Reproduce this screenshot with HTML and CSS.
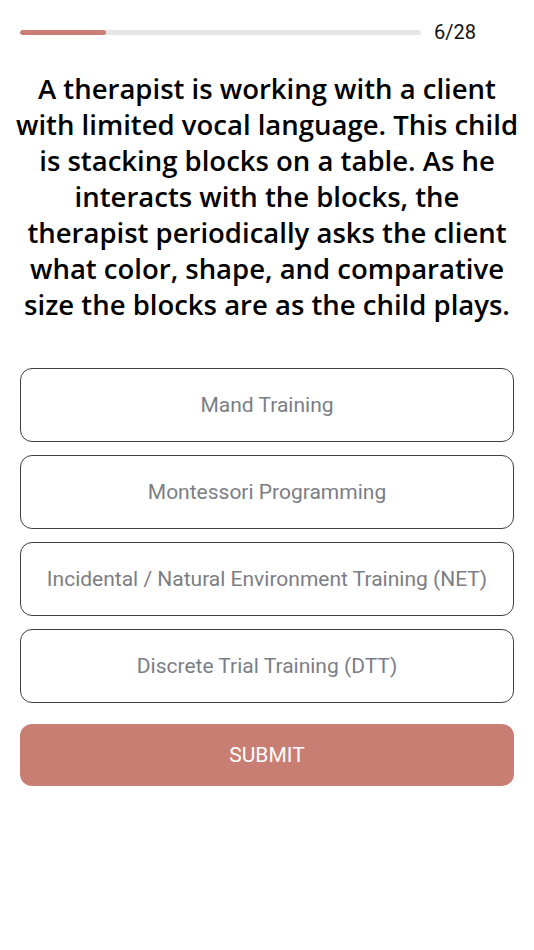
FILE: index.html
```html
<!DOCTYPE html>
<html lang="en">
<head>
    <meta charset="UTF-8">
    <meta name="viewport" content="width=device-width, initial-scale=1.0">
    <title>Quiz</title>
    <link rel="stylesheet" href="styles.css">
</head>
<body>
    <div class="quiz">
        <div class="progress-row">
            <div class="progress-track">
                <div class="progress-fill" style="width: 21.4%"></div>
            </div>
            <span class="progress-count">6/28</span>
        </div>
        <h1 class="question">A therapist is working with a client<br>with limited vocal language. This child<br>is stacking blocks on a table. As he<br>interacts with the blocks, the<br>therapist periodically asks the client<br>what color, shape, and comparative<br>size the blocks are as the child plays.</h1>
        <div class="options">
            <button class="option">Mand Training</button>
            <button class="option">Montessori Programming</button>
            <button class="option">Incidental / Natural Environment Training (NET)</button>
            <button class="option">Discrete Trial Training (DTT)</button>
        </div>
        <button class="submit">SUBMIT</button>
    </div>
</body>
</html>
```

FILE: styles.css
```css
*{
    padding: 0;
    margin: 0;
    box-sizing: border-box;
}
body{
    background-color: white;
    font-family: "Open Sans", "Liberation Sans", sans-serif;
}
.quiz{
    padding: 0 20px;
}
.progress-row{
    display: flex;
    align-items: center;
    height: 64px;
    padding-right: 36px;
    gap: 13px;
}
.progress-track{
    flex: 1;
    height: 5px;
    border-radius: 3px;
    background-color: #e6e6e9;
    overflow: hidden;
}
.progress-fill{
    height: 100%;
    border-radius: 3px;
    background-color: #c97d74;
}
.progress-count{
    width: 44px;
    font-family: Roboto, sans-serif;
    font-size: 20px;
    color: #111;
}
.question{
    margin: 7px -10px 0;
    font-family: "Open Sans", sans-serif;
    font-weight: 600;
    font-size: 27.5px;
    line-height: 36px;
    text-align: center;
    color: #000;
}
.options{
    display: flex;
    flex-direction: column;
    gap: 13px;
    margin-top: 45px;
}
.option{
    height: 74px;
    border: 1.5px solid #3f3f45;
    border-radius: 12px;
    background: white;
    font-family: Roboto, sans-serif;
    font-size: 21px;
    color: #7b7e85;
}
.submit{
    display: block;
    width: 100%;
    height: 62px;
    margin-top: 21px;
    border: none;
    border-radius: 12px;
    background-color: #c97e74;
    font-family: Roboto, sans-serif;
    font-size: 21px;
    color: white;
}
```
